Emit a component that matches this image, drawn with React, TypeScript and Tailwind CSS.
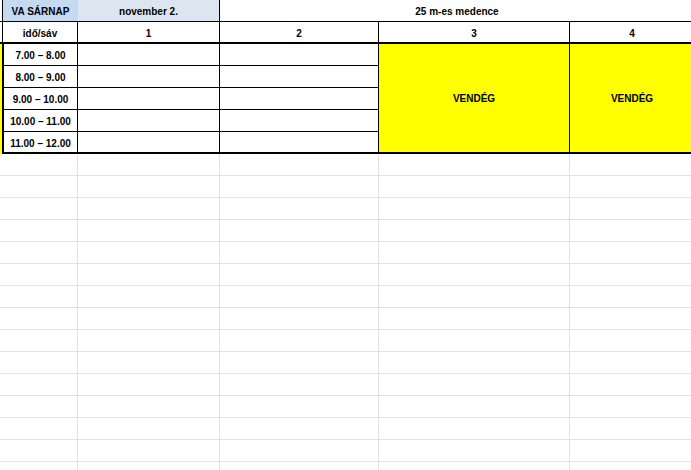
import React from 'react';

const times = ['7.00 – 8.00', '8.00 – 9.00', '9.00 – 10.00', '10.00 – 11.00', '11.00 – 12.00'];

const cell = 'flex items-center justify-center whitespace-nowrap';
const txt = 'flex items-center justify-center whitespace-nowrap pt-[2px]';

export default function App() {
  const emptyRows = Array.from({ length: 15 });

  return (
    <div className="h-[470px] w-[691px] overflow-hidden bg-white font-['Liberation_Sans',Arial,sans-serif] text-[10px] font-bold text-black">
      <div className="grid w-[694px] grid-cols-[2px_76px_142px_159px_191px_124px] auto-rows-[22px]">
        {/* row 1 */}
        <div className="border-b border-black" />
        <div className={`${txt} border-b border-l border-black bg-[#c5d9f1]`}>VA SÁRNAP</div>
        <div className={`${txt} border-b border-r border-black bg-[#dce6f1]`}>november 2.</div>
        <div className={`${txt} col-span-3 border-b border-black`}>25 m-es medence</div>

        {/* row 2 */}
        <div className="border-b-2 border-black" />
        <div className={`${txt} border-b-2 border-l border-r border-black`}>idő/sáv</div>
        <div className={`${txt} border-b-2 border-r border-black`}>1</div>
        <div className={`${txt} border-b-2 border-r border-black`}>2</div>
        <div className={`${txt} border-b-2 border-r border-black`}>3</div>
        <div className={`${txt} border-b-2 border-black`}>4</div>

        {/* data rows */}
        <div className="row-span-5 col-start-1 row-start-3 bg-[#ffff00]" />
        {times.map((t, i) => {
          const last = i === times.length - 1;
          const rowStart = ['row-start-3', 'row-start-4', 'row-start-5', 'row-start-6', 'row-start-7'][i];
          const bb = last ? 'border-b-2' : 'border-b';
          return (
            <React.Fragment key={t}>
              <div className={`${txt} col-start-2 ${rowStart} ${bb} border-l-2 border-r border-black`}>{t}</div>
              <div className={`col-start-3 ${rowStart} ${bb} border-r border-black`} />
              <div className={`col-start-4 ${rowStart} ${bb} border-r border-black`} />
            </React.Fragment>
          );
        })}
        <div className={`${cell} col-start-5 row-start-3 row-span-5 border-b-2 border-r border-black bg-[#ffff00]`}>
          VENDÉG
        </div>
        <div className={`${cell} col-start-6 row-start-3 row-span-5 border-b-2 border-black bg-[#ffff00]`}>
          VENDÉG
        </div>

        {/* empty sheet rows */}
        {emptyRows.map((_, i) => (
          <React.Fragment key={i}>
            <div className="border-b border-[#e1e1e1]" />
            <div className="border-b border-r border-[#e1e1e1]" />
            <div className="border-b border-r border-[#e1e1e1]" />
            <div className="border-b border-r border-[#e1e1e1]" />
            <div className="border-b border-r border-[#e1e1e1]" />
            <div className="border-b border-[#e1e1e1]" />
          </React.Fragment>
        ))}
      </div>
    </div>
  );
}
